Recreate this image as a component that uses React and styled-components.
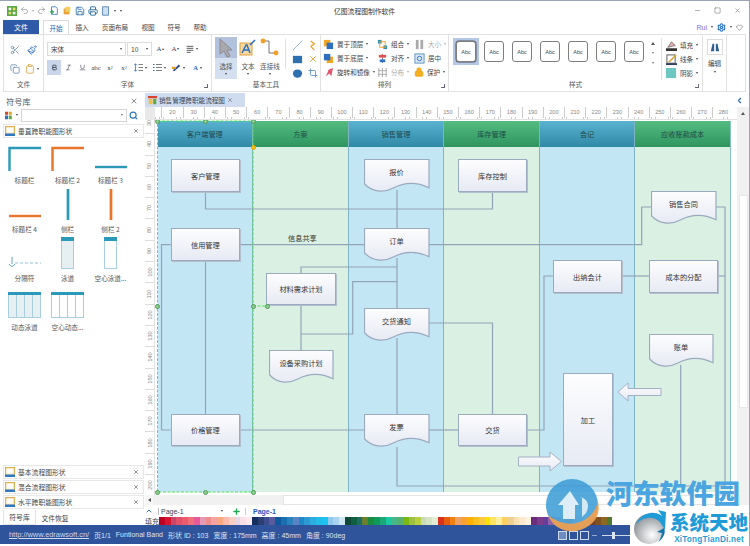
import React from 'react';
import styled, { createGlobalStyle } from 'styled-components';
import { X, Search, ChevronUp, ChevronLeft, Plus, Minus, Square, Undo2, Redo2, Save, Printer, Scissors, Paintbrush, Copy, Clipboard, Settings, Heart, Bold, Italic, Underline, Crop, Lock } from 'lucide-react';

const Global = createGlobalStyle`
  html, body { margin: 0; padding: 0; background: #fff; overflow: hidden; }
  * { box-sizing: border-box; }
  body { font-family: "Noto Sans CJK SC", "Liberation Sans", sans-serif; font-size: 7px; color: #444; }
`;

const Win = styled.div`
  position: relative; width: 750px; height: 546px; overflow: hidden; background: #fff;
  border-top: 1px solid #9ca3b4; border-right: 1px solid #9ca3b4;
  display: flex; flex-direction: column;
`;
const TitleBar = styled.div`
  height: 19px; flex: none; display: grid; grid-template-columns: 334px 1fr auto; align-items: center;
`;
const QuickBar = styled.div`display: flex; align-items: center; gap: 3px; padding-left: 7px;`;
const Title = styled.div`font-size: 6.8px; color: #333;`;
const WinBtns = styled.div`display: flex; gap: 13px; padding-right: 8px; color: #777; align-items: center;`;

const TabBar = styled.div`height: 14px; flex: none; display: flex; align-items: stretch; padding-left: 3px; position: relative;`;
const FileTab = styled.div`width: 36px; background: #2e5aa8; color: #fff; display: flex; align-items: center; justify-content: center; margin-right: 4px; font-size: 7px;`;
const Tab = styled.div`
  width: ${p => p.$w || 26}px; display: flex; align-items: center; justify-content: center; font-size: 6.6px; color: #444;
  ${p => p.$on && 'background:#fff;border:1px solid #dcdcdc;border-bottom:none;color:#2e5aa8;'}
`;
const UserBox = styled.div`margin-left: auto; display: flex; align-items: center; gap: 4px; padding-right: 6px; color: #7b6fe0; font-size: 7px; font-family: "Liberation Sans", sans-serif;`;

const Ribbon = styled.div`height: 58px; flex: none; margin: 0 3px; border: 1px solid #e2e2e2; display: flex; background: #fff;`;
const Group = styled.div`
  width: ${p => p.$w}px; flex: none; display: flex; flex-direction: column; border-right: 1px solid #e2e2e2; position: relative;
`;
const GroupBody = styled.div`flex: 1; min-height: 0;`;
const GroupLabel = styled.div`height: 12px; flex: none; text-align: center; font-size: 6.6px; line-height: 11px; color: #555;`;
const Launcher = styled.span`position: absolute; right: 3px; bottom: 3px; width: 4px; height: 4px; border-right: 1px solid #667; border-bottom: 1px solid #667;`;
const Caret = styled.span`display: inline-block; width: 0; height: 0; border-left: 1.8px solid transparent; border-right: 1.8px solid transparent; border-top: 2.2px solid ${p => p.$c || '#445'}; margin-left: ${p => p.$m ?? 2}px; flex: none;`;

const ClipGrid = styled(GroupBody)`display: grid; grid-template-columns: 15px 20px; grid-auto-rows: 19px; padding: 5px 0 0 3px; align-items: center; justify-items: center;`;
const FontBody = styled(GroupBody)`padding: 6px 0 0 3px; display: flex; flex-direction: column; gap: 4px;`;
const Row = styled.div`display: flex; align-items: center; gap: ${p => p.$g || 0}px;`;
const Combo = styled.div`
  width: ${p => p.$w}px; height: 14px; border: 1px solid #dcdcdc; display: flex; align-items: center; justify-content: space-between; padding: 0 3px; font-size: 6.6px; color: #444;
`;
const Fmt = styled.div`
  width: ${p => p.$w || 14}px; height: 15px; display: flex; align-items: center; justify-content: center; font-size: 7px; color: #445; font-family: "Liberation Serif", serif;
  ${p => p.$on && 'background:#c9d6ea;'}
`;
const Sm = styled.sub`font-size: 4px;`;
const Sp = styled.sup`font-size: 4px;`;

const ToolsBody = styled(GroupBody)`display: flex; padding: 2px 0 0 3px;`;
const BigTool = styled.div`
  width: ${p => p.$w || 22}px; height: 42px; display: flex; flex-direction: column; align-items: center; font-size: 6.6px; color: #555; gap: 2px;
  ${p => p.$on && 'background:linear-gradient(#b3c2dc 0 50%, #d4e0f0 50%);'}
`;
const BigIcon = styled.div`height: 22px; display: flex; align-items: center; justify-content: center; flex: none;`;
const VDiv = styled.div`width: 1px; background: #e2e2e2; margin: ${p => p.$m || '2px 6px 10px'}; flex: none;`;
const SmallGrid = styled.div`display: grid; grid-template-columns: 15px 15px; grid-auto-rows: 14px; padding-top: 1px; align-items: center; justify-items: center;`;

const ArrangeGrid = styled(GroupBody)`display: grid; grid-template-columns: 54px 37px 36px; grid-auto-rows: 14px; padding: 2px 0 0 2px; align-items: center;`;
const ArrItem = styled.div`display: flex; align-items: center; gap: 3px; font-size: 6.6px; color: ${p => p.$off ? '#aaa' : '#444'}; white-space: nowrap;`;

const StyleBody = styled(GroupBody)`display: flex; padding: 3px 0 0 4px;`;
const AbcWrap = styled.div`display: flex; gap: 2px;`;
const AbcCell = styled.div`width: 26px; height: 27px; display: flex; align-items: center; justify-content: center; ${p => p.$on && 'background:#b4c7e7;'}`;
const Abc = styled.div`width: 20px; height: 21px; border: 1px solid #7f7f7f; border-radius: 3px; background: #fff; font-family: "Liberation Sans", sans-serif; font-size: 5.5px; display: flex; align-items: center; justify-content: center; color: #444; ${p => p.$on && 'box-shadow:0 0 0 .5px #555;'}`;
const ScrollArrows = styled.div`width: 10px; height: 30px; display: flex; flex-direction: column; align-items: center; justify-content: space-around; margin-left: 1px; color: #777;`;
const FillList = styled.div`display: flex; flex-direction: column; margin-left: 3px; border-left: 1px solid #e2e2e2; padding-left: 4px; height: 42px;`;
const FillItem = styled.div`height: 14px; display: flex; align-items: center; gap: 3px; font-size: 6.6px; color: #444;`;

const EditBody = styled(GroupBody)`display: flex; flex-direction: column; align-items: center; padding-top: 4px; font-size: 6.6px; color: #444; gap: 3px;`;
const EditBtn = styled.div`width: 16px; height: 16px; border: 1px solid #dcdcdc; display: flex; align-items: center; justify-content: center;`;

const Main = styled.div`height: 433px; flex: none; display: flex; padding-top: 1px;`;
const Side = styled.div`width: 145px; flex: none; display: flex; flex-direction: column; padding: 0 1px 0 3px;`;
const SideHead = styled.div`height: 15px; flex: none; display: flex; align-items: center; justify-content: space-between; padding: 0 6px 0 3px; font-size: 8.2px; color: #555;`;
const SearchRow = styled.div`height: 14px; flex: none; display: flex; align-items: center; gap: 2px; padding-left: 2px;`;
const SearchBox = styled.div`width: 106px; height: 13px; border: 1px solid #d5d5d5; margin-left: 1px; display: flex; align-items: center; justify-content: flex-end; padding-right: 3px;`;
const Cat = styled.div`
  height: 14px; flex: none; margin-bottom: 1px; border: 1px solid #e8e8e8; display: flex; align-items: center; padding: 0 4px 0 1px; gap: 3px; font-size: 6.8px; color: #444; background: #fff;
  & > b { font-weight: 400; flex: 1; }
`;
const CatTop = styled(Cat)`margin-top: 2px;`;
const Gallery = styled.div`flex: 1; display: grid; grid-template-columns: repeat(3, 43px); grid-auto-rows: 49px; align-content: start;`;
const GalItem = styled.div`display: flex; flex-direction: column; align-items: center; justify-content: flex-end; font-size: 6.6px; color: #555; padding-bottom: 3px; white-space: nowrap; gap: 3px;`;
const SideTabs = styled.div`height: 15px; flex: none; display: flex; font-size: 6.8px; color: #444;`;
const SideTab = styled.div`width: ${p => p.$w}px; display: flex; align-items: center; justify-content: center; ${p => p.$on && 'border:1px solid #e4e4e4;border-top:none;background:#fff;'}`;

const Work = styled.div`flex: 1; min-width: 0; display: flex; flex-direction: column;`;
const DocTabs = styled.div`height: 14px; flex: none; display: flex; align-items: center; justify-content: space-between; padding-right: 5px;`;
const DocTab = styled.div`width: 100px; height: 14px; background: #cfdcf0; display: flex; align-items: center; gap: 2px; padding-left: 3px; font-size: 6.6px; color: #345;`;
const WorkArea = styled.div`height: 388px; flex: none; display: flex;`;
const CanvasCol = styled.div`width: 592px; flex: none; display: flex; flex-direction: column;`;
const HRulerRow = styled.div`height: 13px; flex: none; display: flex;`;
const Corner = styled.div`width: 10px; flex: none; background: #e9e9e9;`;
const HRuler = styled.div`flex: 1; display: flex; padding-left: 6.4px; background: #fff; border-bottom: 1px solid #e2e2e2; overflow: hidden;
  background-image: repeating-linear-gradient(90deg, #ccc 0 .5px, transparent .5px 4.24px); background-size: 100% 2px; background-position: 0 100%; background-repeat: no-repeat;`;
const HTick = styled.div`width: 21.2px; flex: none; text-align: center; font: 5.6px "Liberation Sans", sans-serif; color: #888; line-height: 10px; border-left: .5px solid #ccc; height: 11px;`;
const CanvasRow = styled.div`flex: 1; display: flex; min-height: 0;`;
const VRuler = styled.div`width: 10px; flex: none; display: flex; flex-direction: column; border-right: 1px solid #e2e2e2; overflow: hidden;
  & > :first-child { margin-top: -7px; }`;
const VTick = styled.div`height: 21.3px; flex: none; display: flex; align-items: center; justify-content: center; font: 5.6px "Liberation Sans", sans-serif; color: #888; border-bottom: .5px solid #ddd;
  & > span { transform: rotate(-90deg); display: block; }`;
const Stage = styled.div`position: relative; flex: 1; padding: 1px 0 0 2.5px; background: #fff; overflow: hidden;`;
const Lanes = styled.div`width: 573.5px; height: 371px; display: flex;`;
const Lane = styled.div`flex: 1; display: flex; flex-direction: column; border-right: 1px solid ${p => p.$last ? '#86c4c4' : '#7fb4c4'};`;
const LaneHead = styled.div`
  height: 26px; flex: none; display: flex; align-items: center; justify-content: center; font-size: 7.2px; color: #1f4a4a;
  background: ${p => p.$blue ? 'linear-gradient(#59b2cf,#2f89a7)' : 'linear-gradient(#54bb80,#2e9560)'};
`;
const LaneBody = styled.div`flex: 1; background: ${p => p.$blue ? '#c3e6f5' : '#d9f0e3'};`;
const Wires = styled.svg`position: absolute; left: 0; top: 0; width: 582px; height: 375px; pointer-events: none;`;
const Node = styled.div`
  position: absolute; left: ${p => p.$x - 155}px; top: ${p => p.$y - 120}px; width: ${p => p.$w}px; height: ${p => p.$h}px;
  border: 1px solid #9aaabf; box-shadow: 1px 1px 0 #b4bfce; background: linear-gradient(#fdfdfe,#e7eaf4);
  display: flex; align-items: center; justify-content: center; font-size: 7.2px; color: #333;
`;
const DocWrap = styled.div`
  position: absolute; left: ${p => p.$x - 155}px; top: ${p => p.$y - 120}px; width: ${p => p.$w}px; height: ${p => p.$h}px;
  font-size: 7.2px; color: #333; display: flex; justify-content: center; padding-top: ${p => p.$h * 0.24}px;
  & > svg { position: absolute; left: 0; top: 0; }
  & > span { position: relative; }
`;
const FreeText = styled.div`position: absolute; left: ${p => p.$x - 155}px; top: ${p => p.$y - 120}px; font-size: 7.2px; color: #333; white-space: nowrap;`;
const Handle = styled.span`
  position: absolute; left: ${p => p.$x - 157.5}px; top: ${p => p.$y - 122.5}px; width: 5px; height: 5px; border-radius: 50%;
  background: ${p => p.$y2 ? '#f5c518' : '#8fd08f'}; border: 1px solid ${p => p.$y2 ? '#d9a400' : '#4f9a5a'};
`;
const VScroll = styled.div`width: 12px; flex: none; background: #f1f1f1; display: flex; flex-direction: column; align-items: center;`;
const ScrollBtn = styled.div`height: 13px; width: 12px; flex: none; display: flex; align-items: center; justify-content: center; background: #f1f1f1;`;
const UpTri = styled.span`width: 0; height: 0; border-left: 2.5px solid transparent; border-right: 2.5px solid transparent; border-bottom: 3px solid #555;`;
const VThumb = styled.div`width: 9px; height: 213px; margin-top: 75px; background: #fff; border: 1px solid #e8e8e8;`;
const HScroll = styled.div`height: 10px; flex: none; display: flex; background: #f1f1f1; align-items: stretch;`;
const HLeft = styled.div`width: 8px; display: flex; align-items: center; justify-content: center; background: #f6f6f6;`;
const LeftTri = styled.span`width: 0; height: 0; border-top: 2.5px solid transparent; border-bottom: 2.5px solid transparent; border-right: 3px solid #555;`;
const HThumb = styled.div`width: 457px; margin-left: 130px; background: #fff; border: 1px solid #e4e4e4;`;
const PageBar = styled.div`height: 12px; flex: none; display: flex; align-items: center; font: 7px "Liberation Sans", sans-serif; color: #444;`;
const PageSel = styled.div`width: 68px; margin: 0 6px 0 5px; padding-left: 2px; border-left: 1px solid #bbb; display: flex; justify-content: space-between; align-items: center; padding-right: 3px;`;
const PageAct = styled.span`color: #2456c8; font-weight: 700; margin-left: 4px; padding-left: 7px; border-left: 1px solid #ccc;`;
const Swatches = styled.div`height: 8px; flex: none; display: flex; align-items: center; font-size: 7px;`;
const SwLabel = styled.div`width: 14px; flex: none; color: #444; line-height: 8px;`;
const SwGroup = styled.div`width: 93px; flex: none; display: flex; height: 8px;`;
const Sw = styled.span`flex: 1; background: ${p => p.$c};`;

const Status = styled.div`height: 19px; flex: none; background: #30549c; display: flex; align-items: center; padding-left: 9px; gap: 5px; color: #dbe4f3; font-size: 7px; font-family: "Liberation Sans", "Noto Sans CJK SC", sans-serif; white-space: nowrap;`;
const Link = styled.span`text-decoration: underline; color: #cdd9ef; font-size: 7.4px;`;
const Zoomer = styled.div`position: absolute; left: 558px; top: 530px; display: flex; align-items: center; gap: 2px; color: #dfe6f4;`;
const ViewBtn = styled.div`width: 9px; height: 9px; border: 1px solid #cfd9ec; ${p => p.$on && 'background:#6e8cc4;'}`;
const Slider = styled.div`position: relative; width: 28px; height: 1px; background: #cfd9ec; margin-left: 2px;
  &::after { content: ""; position: absolute; left: 10px; top: -3px; width: 3px; height: 7px; background: #dfe6f4; }`;

const WmText = styled.div`position: absolute; left: 606px; top: 478px; font-family: "Noto Sans CJK SC", sans-serif; font-weight: 900; font-size: 26.8px; line-height: 27px; color: #4aa5e0; white-space: nowrap;`;
const WmLogo = styled.svg`position: absolute; left: 540px; top: 474px;`;
const WmBox = styled.div`position: absolute; left: 630px; top: 505px; width: 120px; height: 41px; background: #fff; display: flex; align-items: center; padding-left: 4px; gap: 4px;`;
const WmCol = styled.div`display: flex; flex-direction: column; align-items: center;`;
const WmCn = styled.div`font-weight: 900; font-size: 19.5px; line-height: 26px; color: #1f9cd8;`;
const WmEn = styled.div`font: 700 8.2px/10px "Liberation Sans", sans-serif; color: #1f9cd8; letter-spacing: .2px;`;

const Ico = ({ s = 11, children }) => <svg width={s} height={s} viewBox="0 0 12 12" style={{ flex: 'none' }}>{children}</svg>;
const DocIcon = () => <Ico s={10}><rect x=".5" y=".5" width="11" height="11" fill="#f4dfa6" stroke="#d9a441" /><rect x="2" y="2" width="8" height="6" fill="#fff" /><rect y="9" width="12" height="3" fill="#2f78c4" /></Ico>;

const FRONT = <Ico><rect x="1" y="1" width="7" height="7" fill="#f5a623" /><rect x="4" y="4" width="7" height="7" fill="#2e6fc0" /></Ico>;
const BACK = <Ico><rect x="4" y="4" width="7" height="7" fill="#f5a623" /><rect x="1" y="1" width="7" height="7" fill="#2e6fc0" /></Ico>;

const RED = ['#c00023','#d8142e','#c9486a','#e2536b','#ee5b6f','#ef6f7a','#e85b9b','#e49ab4','#f08c8c','#f5a3a0','#f9a97f','#fbbdaa','#f9cfc4','#e6d5e6','#f9dfe6','#fde9ee'];
const NAVY = ['#15305f','#2b3f73','#3c4c8c','#5a5a9e','#0f5a9c','#1a6fb0','#2c82bd','#5a84c4','#1f88c8','#2d9ad6','#2aaee0','#22bbe8','#1cc2f0','#8fc8ec','#a8d4f0','#cfe6f2'];
const GREEN = ['#0f4a38','#0f5f3f','#1c6c62','#6c7f2c','#1c8a3f','#0f9a5a','#1aa878','#1cc8a0','#48b888','#58b070','#78b810','#a0c040','#b8d040','#c8dcb8','#d4e4c4','#e0ecd4'];
const ORANGE = ['#d8321e','#e85c10','#f08010','#f0a060','#f8a030','#ffb000','#ffc020','#ffc840','#ffe000','#ffe860','#fff0a0','#ffd060','#f0d090','#f8e0b0','#ffe8d0','#fff0e0'];
const PURPLE = ['#6a2c7c','#7c3c8c','#6a3c9c','#9060a8','#c8a0c8','#e0c8e0','#e4b090','#f0d8e8','#f0e8f0','#fff','#70402a','#805020','#8a6a20','#4f7a30','#fff','#fff'];

const Doc = ({ x, y, w, h, t }) => (
  <DocWrap $x={x} $y={y} $w={w} $h={h}>
    <svg width={w + 2} height={h + 2} viewBox={`0 0 ${w + 2} ${h + 2}`}>
      <path d={`M.5 .5H${w}V${h * .87}C${w * .8} ${h * .68} ${w * .6} ${h * .72} ${w * .45} ${h * .88}C${w * .3} ${h * 1.04} ${w * .12} ${h * 1} .5 ${h * .75}Z`} fill="url(#nodeG)" stroke="#9aaabf" strokeWidth="1.2" />
    </svg>
    <span>{t}</span>
  </DocWrap>
);

const Gal = ({ label, children }) => <GalItem>{children}<span>{label}</span></GalItem>;
const Corner1 = ({ c }) => <svg width="34" height="26" viewBox="0 0 34 26"><path d="M1.5 25V2H33" fill="none" stroke={c} strokeWidth="2.4" /></svg>;
const HBar = ({ c }) => <svg width="34" height="10" viewBox="0 0 34 10"><path d="M1 5H33" stroke={c} strokeWidth="2.4" /></svg>;
const VBar = ({ c }) => <svg width="10" height="34" viewBox="0 0 10 34"><path d="M5 1V33" stroke={c} strokeWidth="2.8" /></svg>;
const Pool = ({ fill }) => <svg width="14" height="33" viewBox="0 0 14 33"><rect x=".5" y=".5" width="12" height="31" fill={fill} stroke="#a9cfdc" /><rect width="13" height="4" fill="#2a9ab8" /></svg>;
const Pools = ({ fill }) => <svg width="34" height="27" viewBox="0 0 34 27"><rect x=".5" y=".5" width="32" height="25" fill={fill} stroke="#a9cfdc" /><path d="M8.5 1V26M16.5 1V26M24.5 1V26" stroke="#a9cfdc" /><rect width="33" height="3" fill="#2a9ab8" /></svg>;

const LANES = [['客户端管理', 1], ['方案', 0], ['销售管理', 1], ['库存管理', 0], ['会记', 1], ['应收账款成本', 0]];
const WIRES = [
  'M205.5 192V209H492.5V192', 'M240 244.7H364', 'M429 244.7H641.7V207H651', 'M716 207H725V486H397V447',
  'M170.6 244.7H161.5V430H170.6', 'M205.5 261V414', 'M240 430H364', 'M429 430H458', 'M527 430H544V276H553', 'M622 276H649', 'M718 276H725',
  'M397 190V228', 'M397 258V308', 'M397 338V414', 'M301 273V267H397', 'M301 305V350', 'M397 281.7H352.7V334H301',
  'M429 323H492.5V414', 'M680.7 365V486',
];
const HANDLES = [[157.5,121],[205,121],[253,121],[157.5,306],[253,306],[267,306],[157.5,492],[205,492],[253,492]];

export default function App() {
  return (
    <Win>
      <Global />
      <TitleBar>
        <QuickBar>
          <Ico s={10}><rect width="12" height="12" fill="#5aa846" /><rect x="2" y="2" width="3" height="3" fill="#fff" /><rect x="7" y="7" width="3" height="3" fill="#fff" /><rect x="7" y="2" width="3" height="3" fill="#f5d76e" /><rect x="2" y="7" width="3" height="3" fill="#f5d76e" /></Ico>
          <Undo2 size={9} color="#9a9a9a" strokeWidth={2} /><Caret $m={0} $c="#aaa" />
          <Redo2 size={9} color="#9a9a9a" strokeWidth={2} />
          <Ico s={10}><path d="M3 1H8L10 3V10H3Z" fill="#fff" stroke="#3a7bbd" /><path d="M1 7H6M3.5 4.5V9.5" stroke="#2da55a" strokeWidth="1.6" /></Ico>
          <Ico s={10}><path d="M2 3H9V10H2Z" fill="#e8a23a" /><path d="M4 1H10V7H4Z" fill="#f5cf62" /></Ico>
          <Save size={10} color="#2b6cb0" strokeWidth={2} />
          <Printer size={10} color="#2b6c9a" strokeWidth={2.2} />
          <Ico s={10}><rect x="2" y="1" width="7" height="10" fill="#cfe0f2" stroke="#4c7db0" /></Ico>
          <Caret $m={0} /><Caret $m={1} />
        </QuickBar>
        <Title>亿图流程图制作软件</Title>
        <WinBtns><Minus size={7} /><Square size={7} /><X size={7} /></WinBtns>
      </TitleBar>
      <TabBar>
        <FileTab>文件</FileTab>
        <Tab $on>开始</Tab><Tab>插入</Tab><Tab $w={40}>页面布局</Tab><Tab>视图</Tab><Tab>符号</Tab><Tab>帮助</Tab>
        <UserBox>Rui<Caret $m={0} /><Settings size={9} color="#2b77c8" strokeWidth={3} /><Caret $m={0} /><Heart size={7} color="#777" /></UserBox>
      </TabBar>
      <Ribbon>
        <Group $w={40}>
          <ClipGrid>
            <Scissors size={10} color="#6d8fb0" />
            <Paintbrush size={10} color="#2e6fc0" />
            <Copy size={10} color="#6d8fb0" />
            <Row><Clipboard size={10} color="#d9a441" /><Caret /></Row>
          </ClipGrid>
          <GroupLabel>文件</GroupLabel>
        </Group>
        <Group $w={168}>
          <FontBody>
            <Row $g={1}>
              <Combo $w={79}>宋体<Caret /></Combo>
              <Combo $w={25}>10<Caret /></Combo>
              <Fmt $w={14}>A<Sp>▴</Sp></Fmt><Fmt $w={14}>A<Sp>▾</Sp></Fmt>
              <Fmt $w={18}><Ico s={8}><path d="M1 2H11M1 5H11M1 8H11M1 11H7" stroke="#555" strokeWidth="1.4" /></Ico><Caret /></Fmt>
            </Row>
            <Row>
              <Fmt $on><Bold size={7} strokeWidth={3} /></Fmt>
              <Fmt><Italic size={7} strokeWidth={2} /></Fmt>
              <Fmt><Underline size={7} strokeWidth={2} /></Fmt>
              <Fmt>abc</Fmt>
              <Fmt>x<Sm>2</Sm></Fmt>
              <Fmt>x<Sp>2</Sp></Fmt>
              <Fmt $w={19}><Ico s={9}><path d="M2 1V11M0 3L2 1L4 3M0 9L2 11L4 9" fill="none" stroke="#2e6fc0" /><path d="M6 2H12M6 6H12M6 10H12" stroke="#555" /></Ico><Caret /></Fmt>
              <Fmt $w={19}><Ico s={9}><path d="M0 2H2M0 6H2M0 10H2" stroke="#2e6fc0" strokeWidth="1.6" /><path d="M4 2H12M4 6H12M4 10H12" stroke="#555" /></Ico><Caret /></Fmt>
              <Fmt $w={19}><Ico s={9}><path d="M1 10L9 2L11 4L3 11Z" fill="#2e4f8c" /><rect y="5" width="5" height="3" fill="#e0a020" /></Ico><Caret /></Fmt>
              <Fmt $w={19}><b style={{ color: '#2e6fc0' }}>A</b><Caret /></Fmt>
            </Row>
          </FontBody>
          <GroupLabel>字体</GroupLabel>
          <Launcher />
        </Group>
        <Group $w={109}>
          <ToolsBody>
            <BigTool $on>
              <BigIcon><svg width="16" height="20" viewBox="0 0 16 20"><path d="M2 1L2 16L6 13L9 19L12 18L9 12L14 12Z" fill="#a9a9ad" stroke="#8b8b90" /></svg></BigIcon>
              <span>选择</span><Caret $m={0} />
            </BigTool>
            <BigTool>
              <BigIcon><svg width="18" height="18" viewBox="0 0 18 18"><rect x="1" y="4" width="12" height="12" fill="#f5d9a0" stroke="#e0a040" /><path d="M3 14L7 6H8L11 14M5 11H9.5" fill="none" stroke="#2e6fc0" strokeWidth="1.5" /><path d="M11 6L16 1" stroke="#2e6fc0" strokeWidth="1.6" /></svg></BigIcon>
              <span>文本</span><Caret $m={0} />
            </BigTool>
            <BigTool>
              <BigIcon><svg width="20" height="20" viewBox="0 0 20 20"><path d="M3 3H9V15H16" fill="none" stroke="#777" /><circle cx="3" cy="3" r="2.4" fill="#f0a020" /><circle cx="16" cy="15" r="2.4" fill="#f0a020" /></svg></BigIcon>
              <span>连接线</span><Caret $m={0} />
            </BigTool>
            <VDiv $m="2px 4px 10px" />
            <SmallGrid>
              <Ico><path d="M1 11L11 1" stroke="#8fb0d0" /></Ico>
              <Ico><path d="M4 1L8 4L4 7M4 7L8 11" fill="none" stroke="#f0a020" strokeWidth="1.4" /></Ico>
              <Ico><rect x="1" y="2" width="10" height="8" fill="#2e6fb0" /></Ico>
              <X size={10} color="#e8a030" />
              <Ico><ellipse cx="6" cy="6" rx="5" ry="4.5" fill="#2e6fb0" /></Ico>
              <Crop size={10} color="#5a90c0" />
            </SmallGrid>
          </ToolsBody>
          <GroupLabel>基本工具</GroupLabel>
        </Group>
        <Group $w={128}>
          <ArrangeGrid>
            <ArrItem>{FRONT}置于顶层<Caret $m={0} /></ArrItem>
            <ArrItem><Ico><rect x="1" y="1" width="4" height="4" fill="#2e8fb0" /><rect x="7" y="7" width="4" height="4" fill="#2e8fb0" /><rect x="3" y="3" width="6" height="6" fill="none" stroke="#f0a020" /></Ico>组合<Caret $m={0} /></ArrItem>
            <ArrItem $off><Ico><rect x="2" y="1" width="3" height="10" fill="#aaa" /><rect x="7" y="1" width="3" height="10" fill="#aaa" /></Ico>大小<Caret $m={0} $c="#aaa" /></ArrItem>
            <ArrItem>{BACK}置于底层<Caret $m={0} /></ArrItem>
            <ArrItem><Ico><path d="M6 1V11" stroke="#777" /><rect x="2" y="2" width="8" height="3" fill="#e05050" /><rect x="3" y="7" width="6" height="3" fill="#2e6fc0" /></Ico>对齐<Caret $m={0} /></ArrItem>
            <ArrItem><Ico><rect x="1" y="1" width="10" height="10" fill="#dbe8f6" stroke="#5a90c0" /><circle cx="6" cy="6" r="2.4" fill="none" stroke="#2e6fc0" /></Ico>居中</ArrItem>
            <ArrItem><Ico><path d="M6 3L11 1L9 10L7 7L3 10L5 6Z" fill="#e0566f" /></Ico>旋转和镜像<Caret $m={0} /></ArrItem>
            <ArrItem $off><Ico><path d="M2 1V11M6 1V11M10 1V11M1 4H11M1 8H11" stroke="#aaa" /></Ico>分布<Caret $m={0} $c="#aaa" /></ArrItem>
            <ArrItem><Lock size={10} color="#f0a010" fill="#f5b020" />保护<Caret $m={0} /></ArrItem>
          </ArrangeGrid>
          <GroupLabel>排列</GroupLabel>
          <Launcher />
        </Group>
        <Group $w={254}>
          <StyleBody>
            <AbcWrap>
              <AbcCell $on><Abc $on>Abc</Abc></AbcCell>
              {[1,2,3,4,5,6].map(i => <AbcCell key={i}><Abc>Abc</Abc></AbcCell>)}
            </AbcWrap>
            <ScrollArrows><UpTri /><Caret $m={0} $c="#777" /><Caret $m={0} $c="#777" /></ScrollArrows>
            <FillList>
              <FillItem><Ico><path d="M2 8L6 2L10 6Z" fill="#e8b0b0" stroke="#777" /><rect y="9" width="12" height="3" fill="#333" /></Ico>填充<Caret $m={0} /></FillItem>
              <FillItem><Ico><rect x="1" y="1" width="9" height="9" fill="#fff" stroke="#555" /><path d="M3 9L11 1" stroke="#e0a020" strokeWidth="1.6" /><rect y="10" width="12" height="2" fill="#2e3f60" /></Ico>线条<Caret $m={0} /></FillItem>
              <FillItem><Ico><rect width="11" height="11" fill="#6cc8c0" /></Ico>阴影<Caret $m={0} /></FillItem>
            </FillList>
          </StyleBody>
          <GroupLabel>样式</GroupLabel>
          <Launcher />
        </Group>
        <Group $w={24}>
          <EditBody>
            <EditBtn><Ico s={10}><path d="M1 11L3 2H5V11ZM11 11L9 2H7V11Z" fill="#2e5f94" /></Ico></EditBtn>
            <span>编辑</span><Caret $m={0} />
          </EditBody>
        </Group>
      </Ribbon>
      <Main>
        <Side>
          <SideHead>符号库<X size={8} color="#555" strokeWidth={2} /></SideHead>
          <SearchRow>
            <Ico s={9}><rect x="0" y="1" width="4" height="4" fill="#d8452e" /><rect x="5" y="1" width="4" height="4" fill="#e8a020" /><rect x="0" y="6" width="4" height="5" fill="#2e6fc0" /><rect x="5" y="6" width="4" height="5" fill="#5aa846" /></Ico>
            <Caret $m={0} />
            <SearchBox><Caret $m={0} $c="#777" /></SearchBox>
            <Search size={9} color="#2b77b8" strokeWidth={3} />
          </SearchRow>
          <CatTop><DocIcon /><b>垂直跨职能图形状</b><X size={6} color="#555" strokeWidth={2.5} /></CatTop>
          <Gallery>
            <Gal label="标题栏"><Corner1 c="#2a9ab8" /></Gal>
            <Gal label="标题栏 2"><Corner1 c="#e8752a" /></Gal>
            <Gal label="标题栏 3"><HBar c="#2a9ab8" /></Gal>
            <Gal label="标题栏 4"><HBar c="#e8752a" /></Gal>
            <Gal label="侧栏"><VBar c="#2a9ab8" /></Gal>
            <Gal label="侧栏 2"><VBar c="#e8752a" /></Gal>
            <Gal label="分隔符"><svg width="34" height="14" viewBox="0 0 34 14"><path d="M4 1V8M1 8Q4 13 7 8" fill="none" stroke="#5fa8c0" /><path d="M7 7H33" stroke="#8fc4d4" strokeDasharray="3 2" /></svg></Gal>
            <Gal label="泳道"><Pool fill="#e6eff2" /></Gal>
            <Gal label="空心泳道..."><Pool fill="#fff" /></Gal>
            <Gal label="动态泳道"><Pools fill="#e6eff2" /></Gal>
            <Gal label="空心动态..."><Pools fill="#fff" /></Gal>
          </Gallery>
          <Cat><DocIcon /><b>基本流程图形状</b><X size={6} color="#555" strokeWidth={2.5} /></Cat>
          <Cat><DocIcon /><b>混合流程图形状</b><X size={6} color="#555" strokeWidth={2.5} /></Cat>
          <Cat><DocIcon /><b>水平跨职能图形状</b><X size={6} color="#555" strokeWidth={2.5} /></Cat>
          <SideTabs><SideTab $w={33} $on>符号库</SideTab><SideTab $w={38}>文件恢复</SideTab></SideTabs>
        </Side>
        <Work>
          <DocTabs>
            <DocTab>
              <Ico s={9}><rect y="0" width="12" height="3" fill="#d8452e" /><rect x="1" y="4" width="5" height="7" fill="#f0c040" /><rect x="7" y="4" width="4" height="7" fill="#5aa846" /></Ico>
              销售管理跨职能流程图<X size={6} color="#556" strokeWidth={2} />
            </DocTab>
            <ChevronLeft size={9} color="#2b6cc0" strokeWidth={3} />
          </DocTabs>
          <WorkArea>
            <CanvasCol>
              <HRulerRow>
                <Corner />
                <HRuler>{Array.from({ length: 27 }, (_, i) => <HTick key={i}>{20 + i * 10}</HTick>)}</HRuler>
              </HRulerRow>
              <CanvasRow>
                <VRuler>{Array.from({ length: 18 }, (_, i) => <VTick key={i}><span>{30 + i * 10}</span></VTick>)}</VRuler>
                <Stage>
                  <Lanes>
                    {LANES.map(([t, blue], i) => (
                      <Lane key={t} $last={i === 5}>
                        <LaneHead $blue={!!blue}>{t}</LaneHead>
                        <LaneBody $blue={!!blue} />
                      </Lane>
                    ))}
                  </Lanes>
                  <Wires viewBox="155 120 582 375">
                    <defs>
                      <linearGradient id="nodeG" x1="0" y1="0" x2="0" y2="1"><stop offset="0" stopColor="#fdfdfe" /><stop offset="1" stopColor="#e7eaf4" /></linearGradient>
                    </defs>
                    {WIRES.map(d => <path key={d} d={d} fill="none" stroke="#93a4b8" strokeWidth="1.2" />)}
                    <path d="M157.5 121H253V492H157.5Z" fill="none" stroke="#55e055" strokeWidth="1" strokeDasharray="3 1.5" />
                    <path d="M253 306H267" stroke="#55e055" strokeDasharray="3 1.5" />
                    <path d="M661 388.5H628V383L618 392L628 401V395.5H661Z" fill="url(#nodeG)" stroke="#a4b1c4" />
                    <path d="M518.5 457H550V452L561.5 461.5L550 471V466H518.5Z" fill="url(#nodeG)" stroke="#a4b1c4" />
                  </Wires>
                  <Node $x={170.6} $y={159} $w={69.5} $h={33}>客户管理</Node>
                  <Node $x={170.6} $y={228} $w={69.5} $h={33}>信用管理</Node>
                  <Node $x={170.6} $y={414} $w={69.5} $h={32}>价格管理</Node>
                  <Node $x={266} $y={273} $w={70} $h={32}>材料需求计划</Node>
                  <Node $x={458} $y={159} $w={69} $h={33}>库存控制</Node>
                  <Node $x={458} $y={414} $w={69} $h={32}>交货</Node>
                  <Node $x={553} $y={260} $w={69} $h={33}>出纳会计</Node>
                  <Node $x={649} $y={260} $w={69} $h={33}>成本的分配</Node>
                  <Node $x={563} $y={373} $w={50} $h={93}>加工</Node>
                  <Doc x={364} y={159} w={65} h={33} t="报价" />
                  <Doc x={364} y={228} w={65} h={33} t="订单" />
                  <Doc x={364} y={308} w={65} h={33} t="交货通知" />
                  <Doc x={364} y={414} w={65} h={33} t="发票" />
                  <Doc x={269} y={350} w={64} h={33} t="设备采购计划" />
                  <Doc x={651} y={191} w={65} h={33} t="销售合同" />
                  <Doc x={649} y={334} w={64} h={33} t="账单" />
                  <FreeText $x={288} $y={233}>信息共享</FreeText>
                  {HANDLES.map(([x, y]) => <Handle key={`${x}-${y}`} $x={x} $y={y} />)}
                  <Handle $x={253} $y={147} $y2 />
                </Stage>
              </CanvasRow>
            </CanvasCol>
            <VScroll>
              <ScrollBtn><UpTri /></ScrollBtn>
              <VThumb />
            </VScroll>
          </WorkArea>
          <HScroll>
            <HLeft><LeftTri /></HLeft>
            <HThumb />
          </HScroll>
          <PageBar>
            <ChevronUp size={8} color="#2b77b8" strokeWidth={3} />
            <PageSel>Page-1<Caret $m={0} /></PageSel>
            <Plus size={9} color="#1fa84f" strokeWidth={3.5} />
            <PageAct>Page-1</PageAct>
          </PageBar>
          <Swatches>
            <SwLabel>填充</SwLabel>
            {[RED, NAVY, GREEN, ORANGE, PURPLE].map((g, i) => (
              <SwGroup key={i}>{g.map((c, j) => <Sw key={j} $c={c} />)}</SwGroup>
            ))}
          </Swatches>
        </Work>
      </Main>
      <Status>
        <Link>http://www.edrawsoft.cn/</Link>
        <span>页1/1</span><span>Funtional Band</span><span>形状 ID : 103</span><span>宽度 : 175mm</span><span>高度 : 45mm</span><span>角度 : 90deg</span>
      </Status>
      <Zoomer><ViewBtn $on /><ViewBtn /><ViewBtn /><Minus size={7} /><Slider /></Zoomer>

      <WmLogo width="64" height="64" viewBox="0 0 64 64">
        <circle cx="32" cy="30" r="26" fill="#3f9dd6" opacity=".88" />
        <path d="M8 40C14 56 34 62 50 50C58 44 60 36 58 26C56 40 40 52 24 48C16 46 10 42 8 40Z" fill="#f5a04a" opacity=".9" />
        <path d="M30 16L18 30H23V44H35V30H39Z" fill="#fff" opacity=".8" />
        <path d="M40 22C48 24 50 30 46 38L42 42V22Z" fill="#fff" opacity=".75" />
      </WmLogo>
      <WmText>河东软件园</WmText>
      <WmBox>
        <svg width="32" height="38" viewBox="0 0 32 38" style={{ flex: 'none' }}>
          <defs><radialGradient id="sph" cx=".6" cy=".7" r=".7"><stop offset="0" stopColor="#fff" /><stop offset="1" stopColor="#8a8f94" /></radialGradient></defs>
          <circle cx="15" cy="21" r="15" fill="url(#sph)" />
          <path d="M2 16C8 4 20 2 28 8L24 2L32 4L31 22L26 14C20 8 10 8 2 16Z" fill="#1f9cd8" />
          <path d="M24 34C30 30 32 24 30 20L23 24L28 25C27 29 26 32 24 34Z" fill="#1577a8" />
        </svg>
        <WmCol><WmCn>系统天地</WmCn><WmEn>XiTongTianDi.net</WmEn></WmCol>
      </WmBox>
    </Win>
  );
}
